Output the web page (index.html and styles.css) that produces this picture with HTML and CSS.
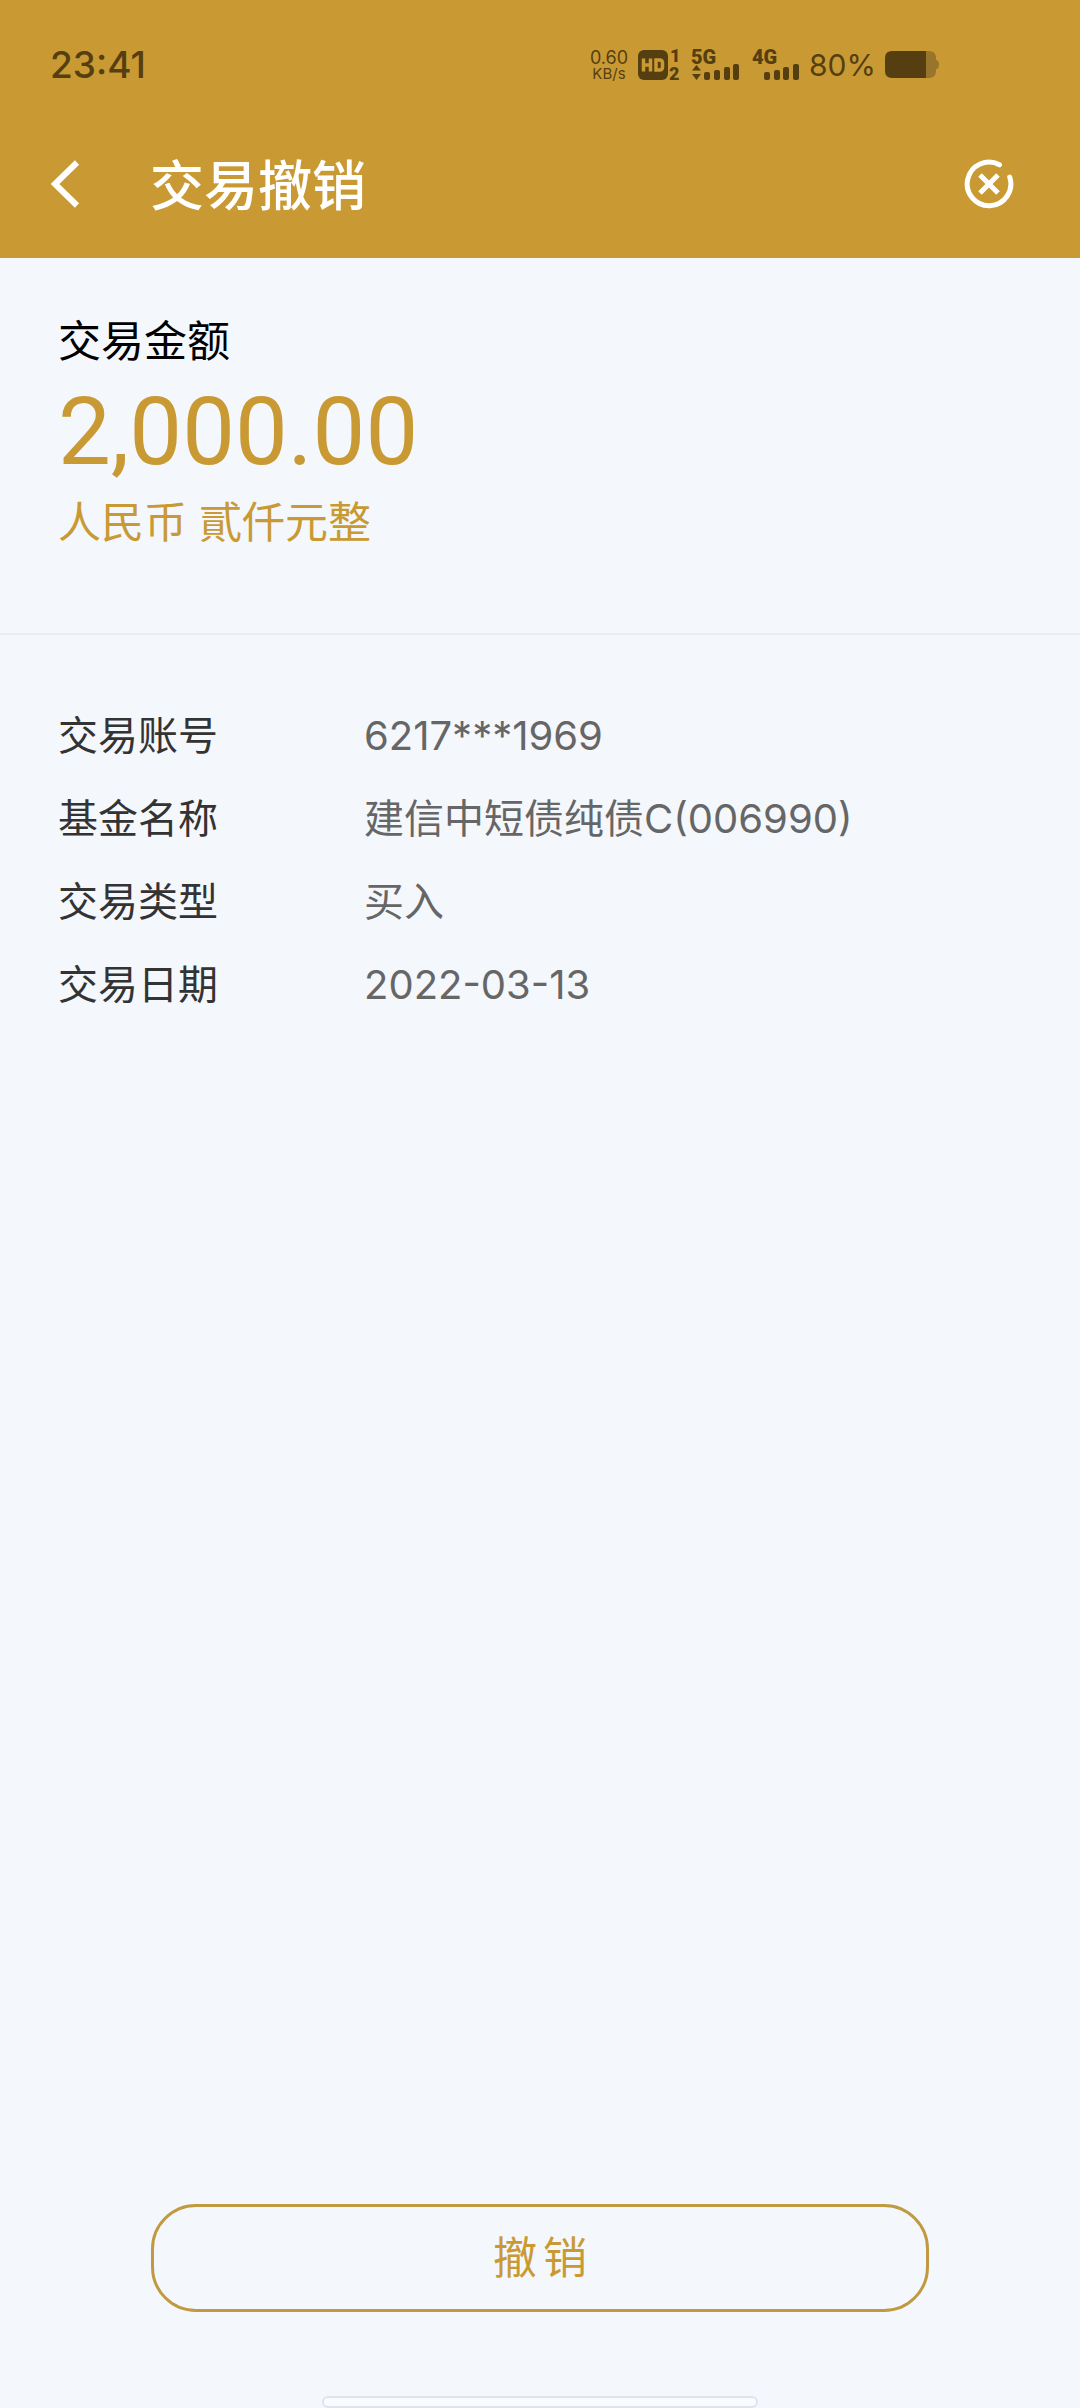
FILE: index.html
```html
<!DOCTYPE html>
<html lang="zh-CN">
<head>
<meta charset="utf-8">
<meta name="viewport" content="width=device-width, initial-scale=1">
<title>交易撤销</title>
<link rel="stylesheet" href="styles.css">
</head>
<body>
<div class="screen">
  <header class="header">
    <div class="status">
      <time class="status-time">23:41</time>
      <div class="status-icons">
        <div class="net-speed"><span class="net-value">0.60</span><span class="net-unit">KB/s</span></div>
        <svg class="icon-hd" width="44" height="44" viewBox="0 -6 44 44" aria-label="HD">
          <rect x="0" y="1" width="30" height="30" rx="6" fill="#553f10"/>
          <path d="M5.500 9.500v13M12.500 9.500v13M5.500 16h7M18 11h3.500q3 0 3 3v4q0 3-3 3H18z" fill="none" stroke="#c99a33" stroke-width="3.500"/>
          <text x="32" y="13" class="sim-label">1</text>
          <text x="31" y="31" class="sim-label">2</text>
        </svg>
        <svg class="icon-5g" width="50" height="44" viewBox="0 -6 50 44">
          <text x="0" y="15" class="signal-label">5G</text>
          <g fill="#553f10">
            <path d="M1 21.500l4.500-5.500 4.500 5.500zM1 25h9l-4.500 6z"/>
            <rect x="13" y="23" width="6" height="8" rx="2"/>
            <rect x="23" y="21" width="6" height="10" rx="2"/>
            <rect x="33" y="18" width="6" height="13" rx="2"/>
            <rect x="42" y="15" width="6" height="16" rx="2"/>
          </g>
        </svg>
        <svg class="icon-4g" width="50" height="44" viewBox="0 -6 50 44">
          <text x="0" y="15" class="signal-label">4G</text>
          <g fill="#553f10">
            <rect x="12" y="23" width="6" height="8" rx="2"/>
            <rect x="22" y="21" width="6" height="10" rx="2"/>
            <rect x="31" y="18" width="6" height="13" rx="2"/>
            <rect x="41" y="15" width="6" height="16" rx="2"/>
          </g>
        </svg>
        <span class="battery-level">80%</span>
        <svg class="icon-battery" width="54" height="28" viewBox="0 0 54 28">
          <path d="M41 0h3q7 0 7 7v2q3 0 3 4.500t-3 4.500v2q0 7-7 7h-3z" fill="#98752a"/>
          <path d="M41 0v27H7q-7 0-7-7V7q0-7 7-7z" fill="#553f10"/>
        </svg>
      </div>
    </div>
    <nav class="nav">
      <button class="icon-button" type="button" aria-label="返回">
        <svg width="30" height="50" viewBox="0 0 30 50" fill="none" stroke="#fff" stroke-width="6"><path d="M27 3.500L5 25l22 21.500"/></svg>
      </button>
      <h1 class="title">交易撤销</h1>
      <button class="icon-button" type="button" aria-label="关闭">
        <svg width="50" height="50" viewBox="-25 -25 50 50" fill="none" stroke="#fff" stroke-width="5" stroke-linecap="round"><path d="M10.500-19.200A21.800 21.800 0 1 0 20.700-7"/><path d="M-9-9l18 18M9-9l-18 18" stroke-linecap="butt"/></svg>
      </button>
    </nav>
  </header>

  <main class="content">
    <section class="summary">
      <h2 class="summary-label">交易金额</h2>
      <p class="amount">2,000.00</p>
      <p class="amount-words">人民币 貳仟元整</p>
    </section>
    <dl class="details">
      <div class="row"><dt>交易账号</dt><dd>6217***1969</dd></div>
      <div class="row"><dt>基金名称</dt><dd>建信中短债纯债C(006990)</dd></div>
      <div class="row"><dt>交易类型</dt><dd>买入</dd></div>
      <div class="row"><dt>交易日期</dt><dd>2022-03-13</dd></div>
    </dl>
  </main>

  <footer class="footer">
    <button class="revoke" type="button"><span>撤</span><span>销</span></button>
    <div class="home-indicator"></div>
  </footer>
</div>
</body>
</html>
```
FILE: styles.css
```css
* {
  box-sizing: border-box;
}

body {
  margin: 0;
  background: #f4f7fc;
  color: #333;
  font-family: Inter, "Noto Sans CJK SC", sans-serif;
}

h1, h2, p, dl, dd {
  margin: 0;
  font-weight: 400;
}

button {
  padding: 0;
  border: 0;
  background: none;
  font-family: inherit;
}

svg {
  display: block;
}

.screen {
  display: flex;
  flex-direction: column;
  min-height: 100vh;
}

.header {
  background: #c99a33;
  color: #fff;
}

.status {
  display: flex;
  justify-content: space-between;
  align-items: center;
  padding: 40px 141px 20px 50px;
  color: #553f10;
}

.status-time {
  font-size: 37px;
  font-weight: 500;
  line-height: 50px;
}

.status-icons {
  display: flex;
  align-items: center;
}

.net-speed {
  display: flex;
  flex-direction: column;
  align-items: center;
  margin-right: 10px;
}

.net-value {
  font-size: 18px;
  line-height: 17px;
}

.net-unit {
  font-size: 15px;
  line-height: 16px;
}

.icon-hd {
  margin-right: 9px;
}

.icon-5g {
  margin-right: 11px;
}

.icon-4g {
  margin-right: 7px;
}

.battery-level {
  margin-right: 9px;
  font-size: 30px;
  line-height: 40px;
}

.sim-label,
.signal-label {
  fill: #553f10;
  font-family: Roboto, sans-serif;
  font-size: 18px;
  font-weight: 900;
}

.signal-label {
  font-size: 20px;
}

.nav {
  display: flex;
  align-items: center;
  padding: 34px 66px 34px 50px;
}

.icon-button {
  cursor: pointer;
}

.title {
  flex: 1;
  margin-left: 70px;
  padding-top: 6px;
  font-size: 54px;
  font-weight: 500;
  line-height: 74px;
}

.content {
  flex: 1;
}

.summary {
  padding: 53px 58px 82px;
  border-bottom: 2px solid #ececef;
}

.summary-label {
  color: #000;
  font-size: 43px;
  line-height: 60px;
}

.amount {
  color: #c99a33;
  font-family: Roboto, sans-serif;
  font-size: 94px;
  line-height: 122px;
}

.amount-words {
  color: #c99a33;
  font-size: 43px;
  line-height: 58px;
}

.details {
  display: grid;
  gap: 28px;
  padding: 73px 58px;
}

.row {
  display: grid;
  grid-template-columns: 306px 1fr;
  font-size: 40px;
  line-height: 55px;
}

.row dd {
  color: #666;
}

.footer {
  display: flex;
  flex-direction: column;
  align-items: center;
}

.revoke {
  display: flex;
  justify-content: center;
  align-items: center;
  gap: 6px;
  width: 72%;
  height: 108px;
  border: 3px solid #c09a40;
  border-radius: 45px;
  color: #c99a33;
  font-size: 44px;
  line-height: 60px;
  cursor: pointer;
}

.home-indicator {
  width: 436px;
  height: 12px;
  margin-top: 84px;
  border: 2px solid #e0e3ea;
  border-radius: 6px;
  background: #f9fbff;
}
```
